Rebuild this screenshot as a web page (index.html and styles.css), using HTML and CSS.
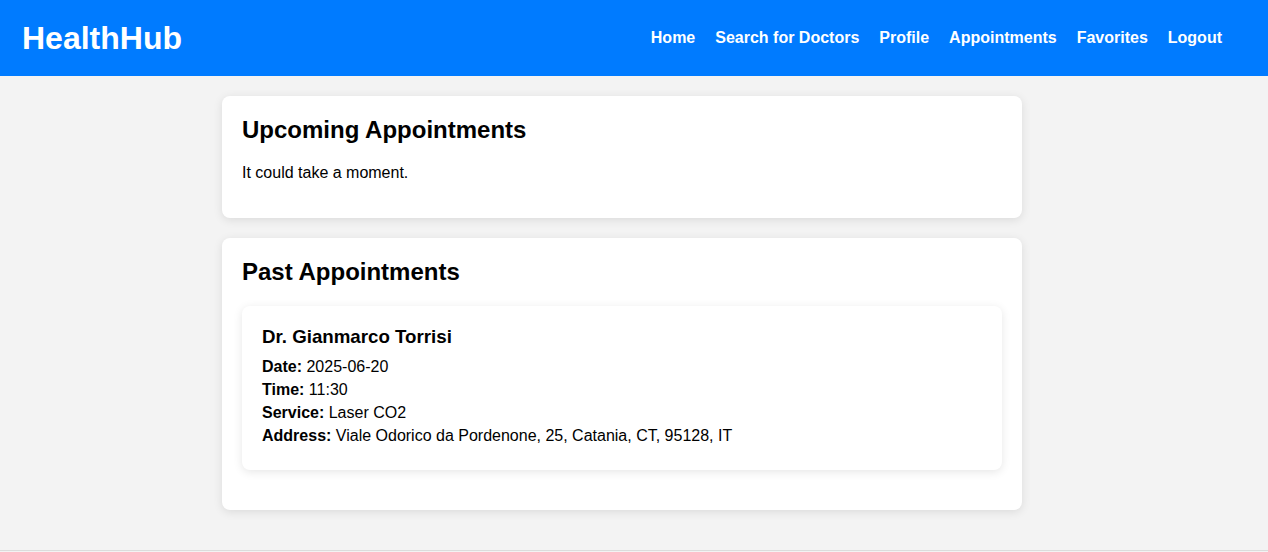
FILE: index.html
```html
<!DOCTYPE html>
<html lang="en">
<head>
<meta charset="utf-8">
<title>HealthHub - Appointments</title>
<link rel="stylesheet" href="styles.css">
</head>
<body>
<header class="topbar">
  <div class="logo">HealthHub</div>
  <nav class="nav">
    <a href="#">Home</a>
    <a href="#">Search for Doctors</a>
    <a href="#">Profile</a>
    <a href="#">Appointments</a>
    <a href="#">Favorites</a>
    <a href="#">Logout</a>
  </nav>
</header>
<div class="page">
  <main class="container">
    <section class="card">
      <h2>Upcoming Appointments</h2>
      <p class="note">It could take a moment.</p>
    </section>
    <section class="card">
      <h2>Past Appointments</h2>
      <div class="appt">
        <h3>Dr. Gianmarco Torrisi</h3>
        <p><strong>Date:</strong> 2025-06-20</p>
        <p><strong>Time:</strong> 11:30</p>
        <p><strong>Service:</strong> Laser CO2</p>
        <p><strong>Address:</strong> Viale Odorico da Pordenone, 25, Catania, CT, 95128, IT</p>
      </div>
    </section>
  </main>
</div>
<footer class="footer"></footer>
</body>
</html>
```
FILE: styles.css
```css
* { box-sizing: border-box; }
html, body { margin: 0; padding: 0; }
body {
  font-family: "Liberation Sans", Arial, sans-serif;
  background: #f3f3f3;
  color: #000;
  font-size: 16px;
}
.topbar {
  height: 76px;
  background: #007bff;
  display: flex;
  align-items: center;
  justify-content: space-between;
  padding: 0 46px 0 22px;
}
.logo {
  color: #fff;
  font-size: 32px;
  font-weight: bold;
  line-height: 37px;
}
.nav {
  display: flex;
  gap: 20px;
}
.nav a {
  color: #fff;
  text-decoration: none;
  font-weight: bold;
  font-size: 16px;
}
.page {
  display: flex;
  justify-content: center;
  padding: 20px 24px 40px 0;
}
.container {
  width: 800px;
  display: flex;
  flex-direction: column;
  gap: 20px;
}
.card {
  background: #fff;
  border-radius: 8px;
  padding: 20px;
  box-shadow: 0 2px 10px rgba(0,0,0,0.1);
}
.card h2 {
  margin: 0 0 20px;
  font-size: 24px;
  line-height: 28px;
}
.note {
  margin: 0 0 16px;
  line-height: 18px;
}
.appt {
  background: #fff;
  border-radius: 8px;
  padding: 20px;
  margin-bottom: 20px;
  box-shadow: 0 2px 10px rgba(0,0,0,0.1);
}
.appt h3 {
  margin: 0 0 10px;
  font-size: 18.72px;
  line-height: 21.5px;
}
.appt p {
  margin: 5px 0;
  line-height: 18px;
}
.footer {
  border-top: 1px solid #dcdcdc;
  height: 2px;
  background: #f3f3f3;
}
```
